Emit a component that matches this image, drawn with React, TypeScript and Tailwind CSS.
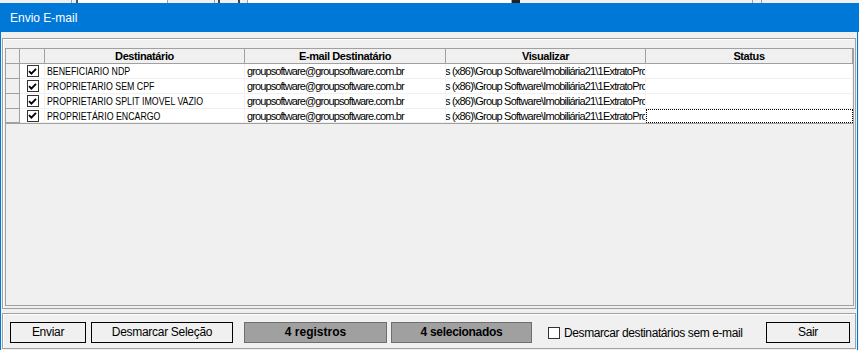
import React from "react";

const rows = [
  "BENEFICIARIO NDP",
  "PROPRIETARIO SEM CPF",
  "PROPRIETARIO SPLIT IMOVEL VAZIO",
  "PROPRIETÁRIO ENCARGO",
];

function CheckMark() {
  return (
    <svg width="9" height="9" viewBox="0 0 9 9">
      <path d="M1 4.2 L3.4 6.6 L8 1.8" fill="none" stroke="#000" strokeWidth="1.9" />
    </svg>
  );
}

function Box({ checked }: { checked: boolean }) {
  return (
    <div className="flex h-[12px] w-[12px] items-center justify-center border border-[#333] bg-white">
      {checked ? <CheckMark /> : null}
    </div>
  );
}

export default function App() {
  return (
    <div className="flex h-[350px] w-[859px] flex-col overflow-hidden bg-[#f0f0f0] font-['Liberation_Sans',Arial,sans-serif] text-black">
      {/* underlying window strip */}
      <div className="flex h-[3px] shrink-0 bg-[#f0f0f0]">
        <div className="w-[72px] border-r border-[#a0a0a0]" />
        <div className="w-[6px] border-r-2 border-[#555]" />
        <div className="w-[90px] border-r border-[#a0a0a0] bg-white" />
        <div className="w-[47px] border-r border-[#a0a0a0]" />
        <div className="w-[5px] border-r-2 border-[#444]" />
        <div className="w-[20px] border-r-2 border-[#444]" />
        <div className="w-[8px] border-r border-[#a0a0a0]" />
        <div className="w-[264px] border-r border-[#a0a0a0] bg-white" />
        <div className="w-[8px] bg-[#222]" />
        <div className="w-[233px] border-r border-[#a0a0a0]" />
        <div className="w-[9px] border-r border-[#a0a0a0]" />
      </div>

      {/* window */}
      <div className="flex flex-1 flex-col border-x border-[#0078d7] mr-[1px]">
        {/* title bar */}
        <div className="flex h-[29px] shrink-0 items-center bg-[#0078d7] pl-[9px] -mr-[2px]">
          <span className="text-[12px] leading-none text-white">Envio E-mail</span>
        </div>

        {/* body */}
        <div className="flex flex-1 flex-col bg-[#f0f0f0] px-[1px] pt-[6px]">
          {/* grid panel */}
          <div className="flex h-[271px] flex-col border border-[#a0a0a0] pl-[2px] pr-[1px] pt-[9px] pb-[2px] shadow-[inset_1px_1px_0_#ffffff]">
            <div className="flex flex-1 flex-col border border-[#a0a0a0] bg-[#f0f0f0]">
              {/* header */}
              <div className="flex h-[15px] border-b border-[#a0a0a0] bg-[#f0f0f0] text-[11px] font-bold leading-[14px] tracking-[-0.4px]">
                <div className="w-[14px] border-r border-[#a0a0a0]" />
                <div className="w-[25px] border-r border-[#a0a0a0]" />
                <div className="w-[200px] border-r border-[#a0a0a0] text-center">Destinatário</div>
                <div className="w-[201px] border-r border-[#a0a0a0] text-center">E-mail Destinatário</div>
                <div className="w-[200px] border-r border-[#a0a0a0] text-center">Visualizar</div>
                <div className="w-[207px] border-r border-[#a0a0a0] text-center">Status</div>
              </div>
              {/* rows */}
              {rows.map((name, i) => {
                const last = i === rows.length - 1;
                return (
                  <div
                    key={name}
                    className={
                      last
                        ? "flex h-[15px] border-b border-[#a0a0a0] text-[11px] leading-[14px]"
                        : "flex h-[15px] text-[11px] leading-[14px]"
                    }
                  >
                    <div className="w-[14px] border-r border-b border-[#a0a0a0] bg-[#f0f0f0]" />
                    <div className="flex w-[25px] items-center justify-center border-r border-b border-[#f0f0f0] bg-white pl-[1px]">
                      <Box checked />
                    </div>
                    <div className="w-[200px] overflow-hidden whitespace-nowrap border-r border-b border-[#f0f0f0] bg-white pl-[2px]">
                      <span className="inline-block origin-left scale-x-[0.8] font-['Liberation_Sans_Narrow','Liberation_Sans',sans-serif]">
                        {name}
                      </span>
                    </div>
                    <div className="w-[201px] overflow-hidden whitespace-nowrap border-r border-b border-[#f0f0f0] bg-white pl-[2px] tracking-[-0.9px]">
                      groupsoftware@groupsoftware.com.br
                    </div>
                    <div className="w-[200px] overflow-hidden whitespace-nowrap border-r border-b border-[#f0f0f0] bg-white tracking-[-0.8px]">
                      <span className="-ml-[1px]">s (x86)\Group Software\Imobiliária21\1ExtratoProprietario.pdf</span>
                    </div>
                    {last ? (
                      <div className="w-[207px] border border-dotted border-black bg-white" />
                    ) : (
                      <div className="w-[207px] border-r border-b border-[#f0f0f0] bg-white" />
                    )}
                  </div>
                );
              })}
            </div>
          </div>

          {/* footer panel */}
          <div className="mt-[4px] flex h-[36px] items-start border border-[#a0a0a0] pl-[7px] pr-[5px] pt-[8px] shadow-[inset_1px_1px_0_#ffffff] text-[12px] tracking-[-0.3px]">
            <button className="h-[21px] w-[76px] border border-black bg-[#f0f0f0] leading-[19px]">Enviar</button>
            <button className="ml-[5px] h-[21px] w-[142px] border border-black bg-[#f0f0f0] leading-[19px]">Desmarcar Seleção</button>
            <div className="ml-[11px] h-[21px] w-[143px] border border-[#6e6e6e] bg-[#a0a0a0] pt-[2px] text-center font-bold leading-[14px] tracking-[0px]">
              4 registros
            </div>
            <div className="ml-[4px] h-[21px] w-[141px] border border-[#6e6e6e] bg-[#a0a0a0] pt-[2px] text-center font-bold leading-[14px]">
              4 selecionados
            </div>
            <div className="ml-[16px] mt-[5px] flex items-center gap-[4px]">
              <Box checked={false} />
              <span className="leading-[12px] tracking-[-0.4px]">Desmarcar destinatários sem e-mail</span>
            </div>
            <button className="ml-auto h-[21px] w-[84px] border border-black bg-[#f0f0f0] leading-[19px]">Sair</button>
          </div>
        </div>
      </div>
    </div>
  );
}
